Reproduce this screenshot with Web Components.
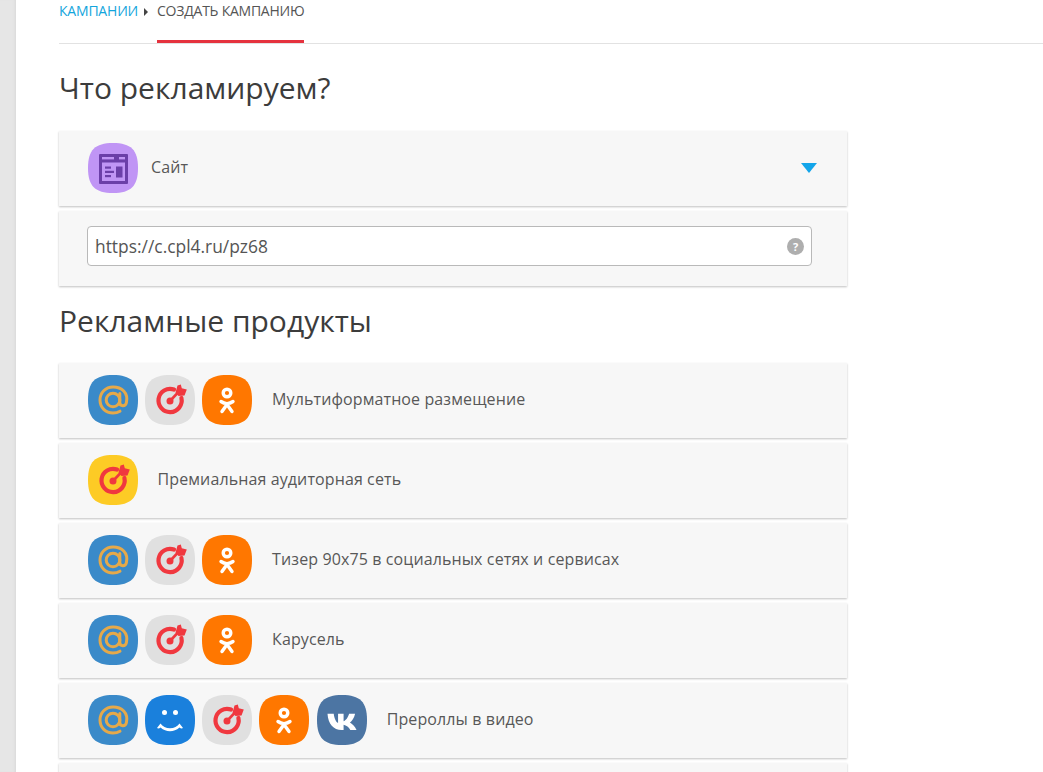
<!DOCTYPE html>
<html lang="ru">
<head>
<meta charset="utf-8">
<title>Создать кампанию</title>
<style>
html, body { margin: 0; height: 772px; overflow: hidden; background: #fff; }
body { font-family: "Open Sans", sans-serif; color: #444; }
</style>
</head>
<body>
<app-page>
	<crumb-bar></crumb-bar>
	<section-title>Что рекламируем?</section-title>
	<panel-row><app-icon name="site"></app-icon><span slot="label">Сайт</span><drop-arrow slot="end"></drop-arrow></panel-row>
	<url-row value="https://c.cpl4.ru/pz68"></url-row>
	<section-title second>Рекламные продукты</section-title>
	<panel-row gap="20"><app-icon name="mail"></app-icon><app-icon name="target"></app-icon><app-icon name="ok"></app-icon><span slot="label">Мультиформатное размещение</span></panel-row>
	<panel-row gap="20"><app-icon name="target-y"></app-icon><span slot="label">Премиальная аудиторная сеть</span></panel-row>
	<panel-row gap="20"><app-icon name="mail"></app-icon><app-icon name="target"></app-icon><app-icon name="ok"></app-icon><span slot="label">Тизер 90x75 в социальных сетях и сервисах</span></panel-row>
	<panel-row gap="20"><app-icon name="mail"></app-icon><app-icon name="target"></app-icon><app-icon name="ok"></app-icon><span slot="label">Карусель</span></panel-row>
	<panel-row gap="20"><app-icon name="mail"></app-icon><app-icon name="smile"></app-icon><app-icon name="target"></app-icon><app-icon name="ok"></app-icon><app-icon name="vk"></app-icon><span slot="label">Прероллы в видео</span></panel-row>
	<panel-row></panel-row>
</app-page>

<script>
"use strict";
/* == [ helpers ] == */
const define = ( tag, html, extra = {} ) => {
	customElements.define( tag, class extends HTMLElement {
		constructor() {
			super();
			this.attachShadow( { mode: "open" } ).innerHTML = html;
		}
		connectedCallback() {
			if ( extra.render ) extra.render( this );
		}
	} );
};

/* squircle, 50x50 */
const blob = "M25 0C43 0 50 7 50 25C50 43 43 50 25 50C7 50 0 43 0 25C0 7 7 0 25 0Z";

const target = ( c ) => `
	<path d="M29 14.6A11.6 11.6 0 1 0 36.4 23" fill="none" stroke="${c}" stroke-width="4.2" stroke-linecap="round"/>
	<circle cx="25" cy="26" r="3.5" fill="${c}"/>
	<path d="M25 26L33 17.5" stroke="${c}" stroke-width="2.6"/>
	<path d="M30.5 17.5L32.5 10.5L35.8 9.5L36.8 13.2L41.8 14.5L39.5 20.5L33.5 21Z" fill="${c}"/>`;

const icons = {
	site: [ "#c095f5", `
		<path d="M12 11h27a1 1 0 0 1 1 1v28a1 1 0 0 1-1 1H12a1 1 0 0 1-1-1V12a1 1 0 0 1 1-1Z" fill="#6b3fa8"/>
		<rect x="14" y="14" width="12" height="2.4" fill="#c095f5"/>
		<rect x="31" y="14" width="6" height="2.4" fill="#c095f5"/>
		<rect x="14" y="19.5" width="23" height="18.5" fill="#c095f5"/>
		<rect x="17" y="23.5" width="6" height="2.2" fill="#6b3fa8"/>
		<rect x="17" y="27.8" width="9" height="2.2" fill="#6b3fa8"/>
		<rect x="17" y="32" width="6" height="2.2" fill="#6b3fa8"/>
		<rect x="28" y="23.5" width="6.5" height="11" fill="#6b3fa8"/>` ],
	mail: [ "#3a8ac9", `
		<circle cx="25" cy="25" r="6.8" fill="none" stroke="#e5a94a" stroke-width="3"/>
		<path d="M31.8 18.5V27.5C31.8 31.6 37.5 32 38.4 27.8C40.6 17.5 33.5 12 25 12C17.5 12 12 17.8 12 25C12 32.5 17.7 38 25 38C27.8 38 30 37.4 32 36.2" fill="none" stroke="#e5a94a" stroke-width="3" stroke-linecap="round"/>` ],
	target: [ "#e0e0e0", target( "#f0383f" ) ],
	"target-y": [ "#fdcb25", target( "#f0383f" ) ],
	ok: [ "#ff7700", `
		<circle cx="25" cy="18" r="3.8" fill="none" stroke="#fff" stroke-width="3.4"/>
		<path d="M19 26.5C22.5 29 27.5 29 31 26.5" fill="none" stroke="#fff" stroke-width="3.4" stroke-linecap="round"/>
		<path d="M20 36.5L25 29.5L30 36.5" fill="none" stroke="#fff" stroke-width="3.4" stroke-linecap="round" stroke-linejoin="round"/>` ],
	smile: [ "#1a80dc", `
		<circle cx="19.5" cy="17.5" r="2.5" fill="#fff"/>
		<circle cx="30.5" cy="17.5" r="2.5" fill="#fff"/>
		<path d="M12 33L15.5 28.5C17.5 31.5 21 33.2 25 33.2C29 33.2 32.5 31.5 34.5 28.5L38 33C37 33.8 35.5 33.5 34.5 32.5C31.5 35 28.5 36.2 25 36.2C21.5 36.2 18.5 35 15.5 32.5C14.5 33.5 13 33.8 12 33Z" fill="#fff"/>` ],
	vk: [ "#4c75a3", `
		<path transform="translate(10.5 17.5) scale(1.2)" d="M0 1H5.2C5.6 4.8 7.2 8 8.8 8.8V1H13.4V7.2C15.2 6.8 17.2 4 18 1H23C22.3 4.6 20.2 7 18.7 8.4C20.5 9.4 22.7 11.4 24.2 14.5H19C17.8 12.4 15.8 10.6 13.4 10.2V14.5H11.8C5 14.5 .6 9.8 0 1Z" fill="#fff"/>` ]
};

/* == [ page shell ] == */
define( "app-page", `
	<style>
		:host { display: flex; height: 772px; overflow: hidden; background: #fff; }
		.gutter { flex: 0 0 16px; background: #e6e6e6; box-shadow: inset -3px 0 3px -2px #d8d8d8; }
		main { flex: 1; min-width: 0; padding-left: 43px; display: flex; flex-direction: column; }
	</style>
	<div class="gutter"></div>
	<main><slot></slot></main>
` );

define( "crumb-bar", `
	<style>
		:host { display: flex; height: 43px; flex: none; border-bottom: 1px solid #e2e2e2; font-size: 14px; line-height: 20px; align-items: flex-start; }
		a { color: #13a5dc; padding-top: 1px; letter-spacing: -.2px; text-decoration: none; }
		i { width: 0; height: 0; border: 4px solid transparent; border-left: 4px solid #444; border-right: 0; margin: 8px 9px 0 6px; }
		b { font-weight: 400; color: #555; padding-top: 1px; height: 39px; border-bottom: 3px solid #e5323e; letter-spacing: -.24px; margin-bottom: -1px; }
	</style>
	<a href="#">КАМПАНИИ</a><i></i><b>СОЗДАТЬ КАМПАНИЮ</b>
` );

define( "section-title", `
	<style>
		:host { display: block; flex: none; font-size: 30px; line-height: 40px; color: #3c3c3c; padding: 24px 0 23px; width: 788px; }
		:host([second]) { padding: 10px 0 22px; }
	</style>
	<slot></slot>
` );

define( "panel-row", `
	<style>
		:host { display: flex; flex: none; align-items: center; box-sizing: border-box; width: 788px; height: 75px; margin-bottom: 5px; padding: 0 29px 1px 28.5px; background: #f7f7f7; box-shadow: 0 1px 2px rgba(0,0,0,.25); font-size: 16px; color: #585858; letter-spacing: .11px; }
		.icons { display: flex; gap: 7.3px; }
		.label { flex: 1; padding-left: 20px; padding-bottom: 2px; }
		:host(:not([gap])) .label { padding-left: 13.5px; }
	</style>
	<div class="icons"><slot></slot></div>
	<div class="label"><slot name="label"></slot></div>
	<slot name="end"></slot>
` );

define( "app-icon", `<style>:host { display: block; width: 50px; height: 50px; } svg { display: block; }</style><svg width="50" height="50" viewBox="0 0 50 50"></svg>`, {
	render: el => {
		const [ bg, art ] = icons[ el.getAttribute( "name" ) ];
		el.shadowRoot.querySelector( "svg" ).innerHTML = `<path d="${ blob }" fill="${ bg }"/>${ art }`;
	}
} );

define( "drop-arrow", `
	<style>
		:host { display: block; width: 0; height: 0; border: 8px solid transparent; border-top: 10px solid #13a5ea; border-bottom: 0; margin: 0 1px 1px 0; }
	</style>
` );

define( "url-row", `
	<style>
		:host { display: flex; flex: none; align-items: center; box-sizing: border-box; width: 788px; height: 75px; margin-bottom: 5px; padding: 0 35px 5px 28px; background: #f7f7f7; box-shadow: 0 1px 2px rgba(0,0,0,.25); }
		.box { flex: 1; height: 40px; box-sizing: border-box; display: flex; align-items: center; background: #fff; border: 1px solid #b9b9b9; border-radius: 4px; padding: 0 7px; font-size: 17.4px; color: #555; }
		.val { flex: 1; padding-bottom: 1px; }
		.q { width: 17px; height: 17px; border-radius: 50%; background: #aeaeae; color: #fff; font-size: 11px; font-weight: 700; line-height: 17px; text-align: center; }
	</style>
	<div class="box"><span class="val"></span><span class="q">?</span></div>
`, {
	render: el => { el.shadowRoot.querySelector( ".val" ).textContent = el.getAttribute( "value" ); }
} );
</script>
</body>
</html>
